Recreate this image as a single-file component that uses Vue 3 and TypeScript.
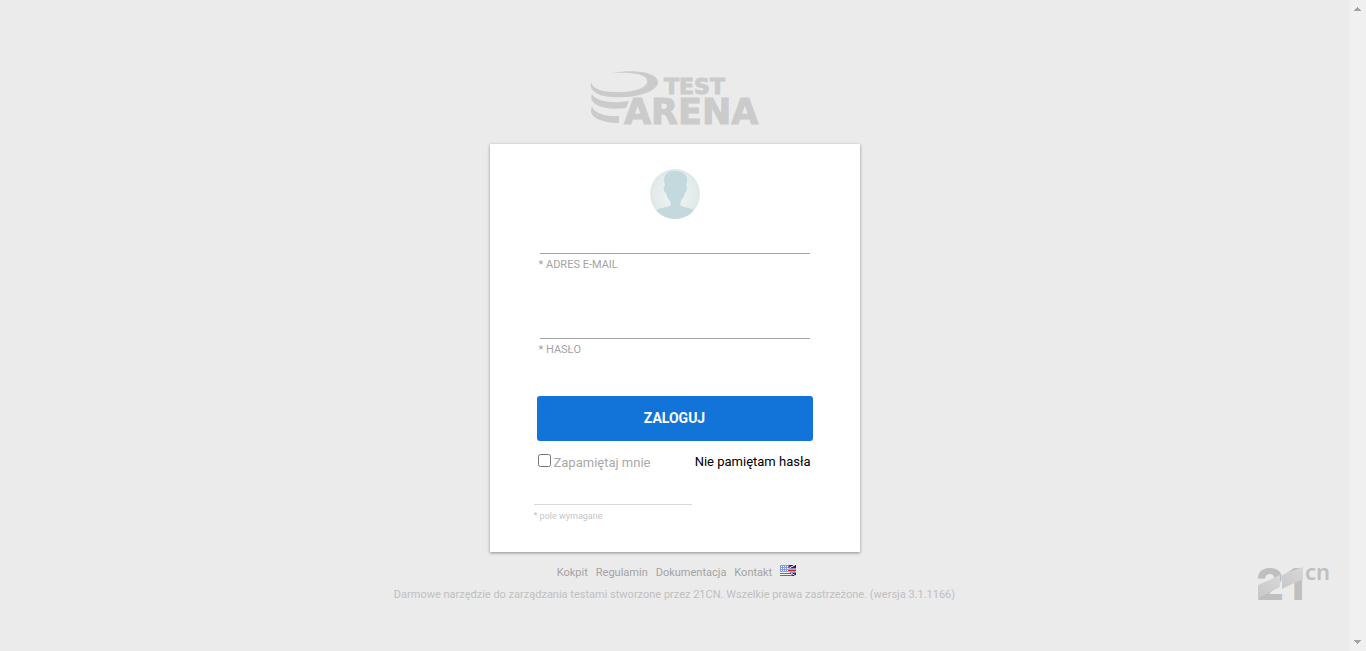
<script setup lang="ts">
import { ref } from 'vue'

const email = ref('')
const password = ref('')
const remember = ref(false)
const links: string[] = ['Kokpit', 'Regulamin', 'Dokumentacja', 'Kontakt']
const stars: number[] = [1, 3, 5, 7]
</script>

<template>
  <div class="page">
    <main class="content">
      <a class="logo" href="#" aria-label="Test Arena">
        <svg width="170" height="64" viewBox="0 0 170 64">
          <g fill="#cbcbcb">
            <path d="M22 3C44-1 67 2 68 12C68 22 44 29 21 27C8 26-1 21 1 12C2 18 11 22 24 22C43 23 59 18 57 10C56 4 42 2 22 3Z" />
            <path d="M2 24C5 31 21 34 39 31L36 38C17 41-3 35 2 24Z" />
            <path d="M2 37C5 43 15 47 29 46V53C12 53-3 47 2 37Z" />
            <text class="word-test" x="74" y="24">TEST</text>
            <text class="word-arena" x="34" y="54">ARENA</text>
          </g>
        </svg>
      </a>

      <form class="card" @submit.prevent>
        <svg class="avatar" width="50" height="50" viewBox="0 0 50 50" aria-hidden="true">
          <defs>
            <radialGradient id="avatar-bg">
              <stop offset="0" stop-color="#f4f7f7" />
              <stop offset="1" stop-color="#dfe8e8" />
            </radialGradient>
            <clipPath id="avatar-clip"><circle cx="25" cy="25" r="25" /></clipPath>
          </defs>
          <g clip-path="url(#avatar-clip)">
            <rect width="50" height="50" fill="url(#avatar-bg)" />
            <path d="M25 2C33 2 38 6 37 13L36 17C38 17 37 23 35 24C34 29 32 30 31 32L30 36C33 39 41 38 44 42V50H6V42C9 38 18 39 21 36L20 32C18 30 17 28 16 24C13 23 13 17 15 17L14 12C14 5 18 2 25 2Z" fill="#c3d9dd" />
          </g>
        </svg>

        <div class="fields">
          <div class="field">
            <input id="email" v-model="email" type="email" required />
            <label for="email">* ADRES E-MAIL</label>
          </div>
          <div class="field">
            <input id="password" v-model="password" type="password" required />
            <label for="password">* HASŁO</label>
          </div>
          <button class="submit" type="submit">ZALOGUJ</button>
          <div class="options">
            <label class="remember" for="remember">
              <input id="remember" v-model="remember" type="checkbox" />
              <span>Zapamiętaj mnie</span>
            </label>
            <a class="forgot" href="#">Nie pamiętam hasła</a>
          </div>
        </div>
        <p class="required">* pole wymagane</p>
      </form>

      <footer class="footer">
        <nav class="links">
          <a v-for="link in links" :key="link" href="#">{{ link }}</a>
          <a class="flag" href="#" aria-label="English">
            <svg width="16" height="11" viewBox="0 0 16 11">
              <rect width="16" height="11" fill="#fff" />
              <rect width="10" height="7" fill="#7c9ee0" />
              <g fill="#fff">
                <template v-for="x in stars" :key="x">
                  <rect :x="x" y="1" width="1" height="1" />
                  <rect :x="x" y="3" width="1" height="1" />
                  <rect :x="x" y="5" width="1" height="1" />
                </template>
              </g>
              <path d="M0 8.5H12M0 10.5H14" stroke="#e33b3b" />
              <path d="M9 0H16V11H13L9 7Z" fill="#17277d" />
              <path d="M9 3L15 0M11 8L16 11" stroke="#fff" />
              <path d="M8 5.5H16" stroke="#fff" stroke-width="4" />
              <path d="M8 5.5H16" stroke="#d8202c" stroke-width="2" />
              <path d="M9 0V3" stroke="#d8202c" />
            </svg>
          </a>
        </nav>
        <p class="copyright">Darmowe narzędzie do zarządzania testami stworzone przez 21CN. Wszelkie prawa zastrzeżone. (wersja 3.1.1166)</p>
      </footer>

      <a class="vendor" href="#" aria-label="21cn">
        <svg width="78" height="52" viewBox="0 -6 78 52">
          <defs>
            <linearGradient id="ribbon" x1="0" y1="1" x2="1" y2="0">
              <stop offset="0" stop-color="#c8c8c8" />
              <stop offset="1" stop-color="#d8d8d8" />
            </linearGradient>
          </defs>
          <g fill="#bfbfbf">
            <text class="digits" x="-1" y="35">2</text>
            <text class="digits" x="28" y="35">1</text>
            <text class="suffix" x="48" y="15">cn</text>
          </g>
          <path d="M1 20L23 10V22L1 33Z" fill="url(#ribbon)" />
          <path d="M25 12Q25 10 27 9L46 2V14L25 24Z" fill="url(#ribbon)" />
        </svg>
      </a>
    </main>

    <div class="track" aria-hidden="true">
      <svg width="9" height="5" viewBox="0 0 9 5"><path d="M4 0H5V1H6V2H7V3H8V4H1V3H2V2H3V1H4Z" fill="#a3a3a3" /></svg>
      <svg width="9" height="5" viewBox="0 0 9 5"><path d="M1 0H8V1H7V2H6V3H5V4H4V3H3V2H2V1H1Z" fill="#a3a3a3" /></svg>
    </div>
  </div>
</template>

<style>
body {
  background: #ebebeb;
}
</style>

<style scoped>
.page {
  display: flex;
  min-height: 100vh;
  background: #ebebeb;
  font-family: Roboto, "Liberation Sans", sans-serif;
  font-size: 11px;
}
.page *,
.page {
  box-sizing: border-box;
}
a {
  text-decoration: none;
}
.content {
  position: relative;
  flex: 1;
  display: flex;
  flex-direction: column;
  align-items: center;
  padding: 70px 0 47px;
}
.logo svg,
.flag svg,
.vendor svg {
  display: block;
  overflow: visible;
}
.word-test,
.word-arena {
  font-family: "DejaVu Sans", sans-serif;
  font-weight: 700;
  stroke: #cbcbcb;
  stroke-width: 1px;
}
.word-test {
  font-size: 22px;
}
.word-arena {
  font-size: 35px;
}
.card {
  width: 370px;
  max-width: 100%;
  margin-top: 10px;
  padding: 25px 44px 30px;
  background: #fff;
  box-shadow: 0 1px 3px rgba(0, 0, 0, 0.4);
}
.avatar {
  display: block;
  margin: 0 auto;
}
.fields {
  padding: 0 3px;
}
.field {
  display: flex;
  flex-direction: column;
  height: 85px;
}
.field input {
  height: 35px;
  margin: 0 3px;
  padding: 4px 0;
  border: 0;
  border-bottom: 1px solid #a3a3a3;
  outline: 0;
  background: transparent;
  font: inherit;
  font-size: 14px;
}
.field label {
  margin-top: 4px;
  padding-left: 2px;
  line-height: 14px;
  color: #a3a3a3;
}
.submit {
  display: block;
  width: 100%;
  height: 45px;
  margin-top: 7px;
  padding: 0;
  border: 0;
  border-radius: 3px;
  background: #1274d8;
  color: #fff;
  font: 700 14px/45px Roboto, "Liberation Sans", sans-serif;
}
.options {
  display: flex;
  justify-content: space-between;
  margin-top: 13px;
  padding: 0 2px 0 1px;
  font-size: 13px;
  line-height: 16px;
}
.remember {
  display: flex;
  gap: 3px;
  color: #a9a9a9;
}
.remember span {
  padding-top: 1px;
}
.remember input {
  width: 13px;
  height: 13px;
  margin: 0;
}
.forgot {
  color: #000;
}
.required {
  width: 158px;
  margin: 33px 0 0;
  padding-top: 5px;
  border-top: 1px solid #d9d9d9;
  font-size: 9px;
  line-height: 12px;
  color: #c6c6c6;
}
.footer {
  margin-top: 13px;
  text-align: center;
  line-height: 14px;
}
.links {
  display: flex;
  justify-content: center;
  gap: 8px;
  padding-left: 4px;
}
.links a {
  padding-top: 1px;
  color: #a3a3a3;
}
.links .flag {
  padding-top: 0;
}
.copyright {
  margin: 8px 0 0;
  color: #c0c0c0;
}
.vendor {
  position: absolute;
  right: 14px;
  bottom: 40px;
}
.digits {
  font: 800 44px Inter, sans-serif;
}
.suffix {
  font: 600 22px "Noto Sans", sans-serif;
}
.track {
  display: flex;
  flex-direction: column;
  justify-content: space-between;
  align-items: center;
  width: 17px;
  padding: 7px 0 6px;
  background: #f0f0f0;
}
</style>
